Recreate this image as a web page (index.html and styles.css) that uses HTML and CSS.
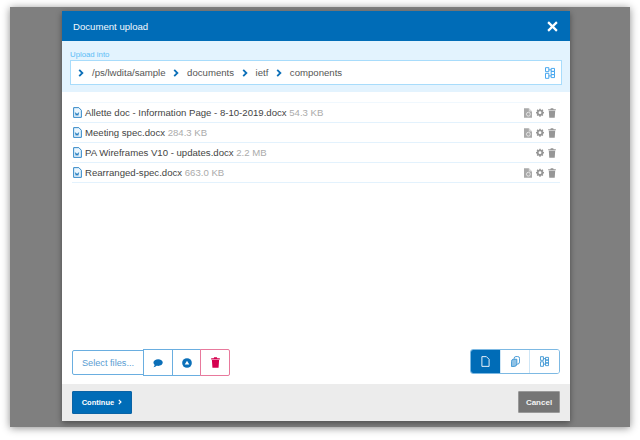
FILE: index.html
```html
<!DOCTYPE html>
<html lang="en">
<head>
<meta charset="utf-8">
<title>Document upload</title>
<link rel="stylesheet" href="styles.css">
</head>
<body>
<svg class="defs" width="0" height="0" aria-hidden="true">
  <symbol id="doc" viewBox="0 0 10 12"><path d="M.7.600h5.800L9.300 3.500V11.400H.7z" fill="#eaf5fd" stroke="#2f86c6" stroke-width="1.100"/><path d="M2.600 6l.9 3.200.9-2.200 1 2.200.9-3.200" fill="none" stroke="#0b6fb8" stroke-width=".9"/></symbol>
  <symbol id="clone" viewBox="0 0 10 12"><path d="M0 0h6l4 4v8H0z" fill="#a9a9a9"/><path d="M6 0l4 4H6z" fill="#d8d8d8"/><circle cx="5.500" cy="7.500" r="2.400" fill="none" stroke="#ececec" stroke-width="1.100"/></symbol>
  <symbol id="gear" viewBox="0 0 12 12"><path d="M5 .2h2l.3 1.500 1 .4 1.300-.8 1.400 1.400-.8 1.300.4 1 1.500.3v2l-1.500.3-.4 1 .8 1.300-1.400 1.400-1.300-.8-1 .4-.3 1.500H5l-.3-1.500-1-.4-1.300.8L1 9.900l.8-1.300-.4-1L-.1 7.300v-2l1.500-.3.4-1L1 2.700 2.400 1.300l1.300.8 1-.4z" fill="#969696"/><circle cx="6" cy="6.200" r="2.100" fill="#fff"/></symbol>
  <symbol id="trash" viewBox="0 0 10 12"><path d="M.2 1.200h2.800L3.500.2h3L7 1.200h2.800v1.400H.2zM1 3.300h8l-.6 8.500H1.600z" fill="currentColor"/></symbol>
  <symbol id="tree" viewBox="0 0 12 14"><path d="M.6.600h4v4.800h-4zM.6 7.400h4v6h-4zM7.400 1.500h4v3.600h-4zM7.400 5.100h4v3.800h-4zM7.400 8.900h4v3.600h-4zM4.600 3.200h2.800M4.600 10.500h2.800" fill="none" stroke="currentColor" stroke-width="1.200"/></symbol>
  <symbol id="chev" viewBox="0 0 6 8"><path d="M1.200.8L4.400 4 1.200 7.200" fill="none" stroke="currentColor" stroke-width="1.800"/></symbol>
</svg>
<main class="stage">
  <section class="dialog">
    <header class="head">
      <h1 class="title">Document upload</h1>
      <svg class="close" viewBox="0 0 10 10"><path d="M1 1l8 8M9 1l-8 8" stroke="#fff" stroke-width="2"/></svg>
    </header>
    <div class="target">
      <div class="target-label">Upload into</div>
      <div class="path">
        <svg class="chev"><use href="#chev"/></svg><span class="crumb">/ps/lwdita/sample</span>
        <svg class="chev"><use href="#chev"/></svg><span class="crumb">documents</span>
        <svg class="chev"><use href="#chev"/></svg><span class="crumb">ietf</span>
        <svg class="chev"><use href="#chev"/></svg><span class="crumb">components</span>
        <svg class="tree-btn"><use href="#tree"/></svg>
      </div>
    </div>
    <ul class="files">
      <li class="file">
        <svg class="doc"><use href="#doc"/></svg>
        <span class="name">Allette doc - Information Page - 8-10-2019.docx <span class="size">54.3 KB</span></span>
        <svg class="act clone"><use href="#clone"/></svg><svg class="act gear"><use href="#gear"/></svg><svg class="act trash"><use href="#trash"/></svg>
      </li>
      <li class="file">
        <svg class="doc"><use href="#doc"/></svg>
        <span class="name">Meeting spec.docx <span class="size">284.3 KB</span></span>
        <svg class="act clone"><use href="#clone"/></svg><svg class="act gear"><use href="#gear"/></svg><svg class="act trash"><use href="#trash"/></svg>
      </li>
      <li class="file">
        <svg class="doc"><use href="#doc"/></svg>
        <span class="name">PA Wireframes V10 - updates.docx <span class="size">2.2 MB</span></span>
        <svg class="act gear"><use href="#gear"/></svg><svg class="act trash"><use href="#trash"/></svg>
      </li>
      <li class="file">
        <svg class="doc"><use href="#doc"/></svg>
        <span class="name">Rearranged-spec.docx <span class="size">663.0 KB</span></span>
        <svg class="act clone"><use href="#clone"/></svg><svg class="act gear"><use href="#gear"/></svg><svg class="act trash"><use href="#trash"/></svg>
      </li>
    </ul>
    <div class="tools">
      <div class="group">
        <button class="select">Select files...</button>
        <button class="square">
          <svg class="ic" viewBox="0 0 12 12"><path d="M6.200 1.500c3 0 5.500 1.700 5.500 4s-2.500 4-5.500 4c-.7 0-1.300-.1-1.900-.2C3.400 10.200 2 10.800.6 11c.8-.8 1.300-1.700 1.400-2.600C1 7.600.5 6.600.5 5.500c0-2.300 2.700-4 5.700-4z" fill="#0b6fb8"/></svg>
        </button>
        <button class="square">
          <svg class="ic" viewBox="0 0 12 12"><circle cx="6" cy="6" r="5.800" fill="#0b6fb8"/><path d="M6 3.200L8.800 7.800H3.200z" fill="#fff"/></svg>
        </button>
        <button class="square danger"><svg class="ic red"><use href="#trash"/></svg></button>
      </div>
      <div class="views">
        <button class="view on"><svg class="vic" viewBox="0 0 10 12"><path d="M1 .6h5L9 3.600v7.800H1z" fill="none" stroke="#fff"/></svg></button>
        <button class="view"><svg class="vic" viewBox="0 0 10 12"><path d="M3.500 5V2.500a2 2 0 0 1 2-2h2a2 2 0 0 1 2 2v4a2.500 2.500 0 0 1-2.500 2.500H6.500" fill="#fff" stroke="#3a94d4"/><path d="M.5 6a2.500 2.500 0 0 1 2.500-2.500h3.500v5a3 3 0 0 1-3 3H.5z" fill="#8fc2e6" stroke="#3a94d4"/></svg></button>
        <button class="view"><svg class="vic tree-sm"><use href="#tree"/></svg></button>
      </div>
    </div>
    <footer class="foot">
      <button class="continue">Continue <svg class="cont-chev"><use href="#chev"/></svg></button>
      <button class="cancel">Cancel</button>
    </footer>
  </section>
</main>
</body>
</html>
```

FILE: styles.css
```css
* { box-sizing: border-box; }
html, body { margin: 0; height: 100%; background: #fff; }
body { padding: 7px 10px 13px; font-family: "Liberation Sans", Arial, sans-serif; overflow: hidden; }
.defs { display: block; height: 0; }
button { font-family: inherit; margin: 0; cursor: pointer; }
.stage {
  height: 420px; background: #7f7f7f; padding: 4px 60px 6px 52px;
  box-shadow: 0 1px 8px rgba(0,0,0,.45);
}
.dialog {
  height: 410px; display: flex; flex-direction: column; background: #fff;
  box-shadow: 0 2px 6px rgba(0,0,0,.4);
}
.head {
  height: 30px; flex: none; background: #006cb7; display: flex; align-items: center;
  justify-content: space-between; padding: 0 12px 0 11px;
}
.title { margin: 0; font-size: 9.600px; font-weight: 400; color: #f4f9fd; }
.close { width: 11px; height: 11px; }
.target { flex: none; height: 51px; background: #e3f3fe; padding: 8px 8px 0; }
.target-label { font-size: 7.800px; line-height: 11px; color: #5cbcf6; }
.path {
  height: 25px; background: #fff; border: 1px solid #a8dcfb; display: flex; align-items: center;
  padding: 0 6px 0 7px; font-size: 9.600px; color: #555;
}
.chev { width: 6px; height: 8px; color: #0b6fb8; flex: none; }
.crumb { margin: 0 7.500px 0 8px; }
.tree-btn { width: 10px; height: 12px; margin-left: auto; color: #4aa8ee; }
.files { list-style: none; margin: 10px 10px 0; padding: 0; flex: 1; border-top: 1px solid #f0f8fe; }
.file {
  height: 20px; display: flex; align-items: center; border-bottom: 1px solid #e3f2fd;
  font-size: 9.600px; color: #444; padding: 0 4px 0 1px;
}
.doc { width: 9px; height: 11px; margin-right: 3px; flex: none; }
.name { margin-right: auto; white-space: nowrap; }
.size { color: #ababab; }
.act { height: 10px; width: 8px; margin-left: 4px; flex: none; }
.gear { height: 9px; }
.trash { color: #969696; }
.tools { flex: none; height: 36px; padding: 1px 10px 8px; display: flex; justify-content: space-between; align-items: flex-start; }
.group { display: flex; align-items: center; }
.select {
  width: 72px; height: 25px; background: #fff; border: 1px solid #6aaee0; border-radius: 2px 0 0 2px;
  font-size: 9.200px; color: #5a9dd2; padding: 0;
}
.square {
  width: 30px; height: 27px; margin-left: -1px; background: #fff; border: 1px solid #6aaee0;
  display: flex; align-items: center; justify-content: center; padding: 0;
}
.danger { margin-left: -2px; border-color: #e8799c; border-radius: 0 2px 2px 0; }
.ic { width: 10px; height: 10px; }
.red { color: #d5004f; height: 11px; width: 9px; }
.views { display: flex; width: 90px; height: 25px; border: 1px solid #7db9e3; border-radius: 3px; overflow: hidden; }
.view { flex: 1; border: 0; border-left: 1px solid #cfe6f6; background: #fff; display: flex; align-items: center; justify-content: center; padding: 0; }
.view.on { background: #006cb7; border-left: 0; }
.vic { width: 9px; height: 11px; }
.tree-sm { color: #3a94d4; }
.foot {
  flex: none; height: 37px; background: #ececec; padding: 7px 10px 0; display: flex;
  justify-content: space-between; align-items: flex-start;
}
.continue {
  width: 60px; height: 23px; background: #006cb7; border: 1px solid #0a63a5; border-radius: 1px; color: #fff;
  font-size: 7.500px; font-weight: 700; padding: 0;
}
.cont-chev { width: 4px; height: 6px; color: #fff; margin-left: 2px; }
.cancel {
  width: 42px; height: 22px; background: #757575; border: 1px solid #999; border-radius: 1px; color: #f2f2f2;
  font-size: 8px; font-weight: 700; padding: 0;
}
```
